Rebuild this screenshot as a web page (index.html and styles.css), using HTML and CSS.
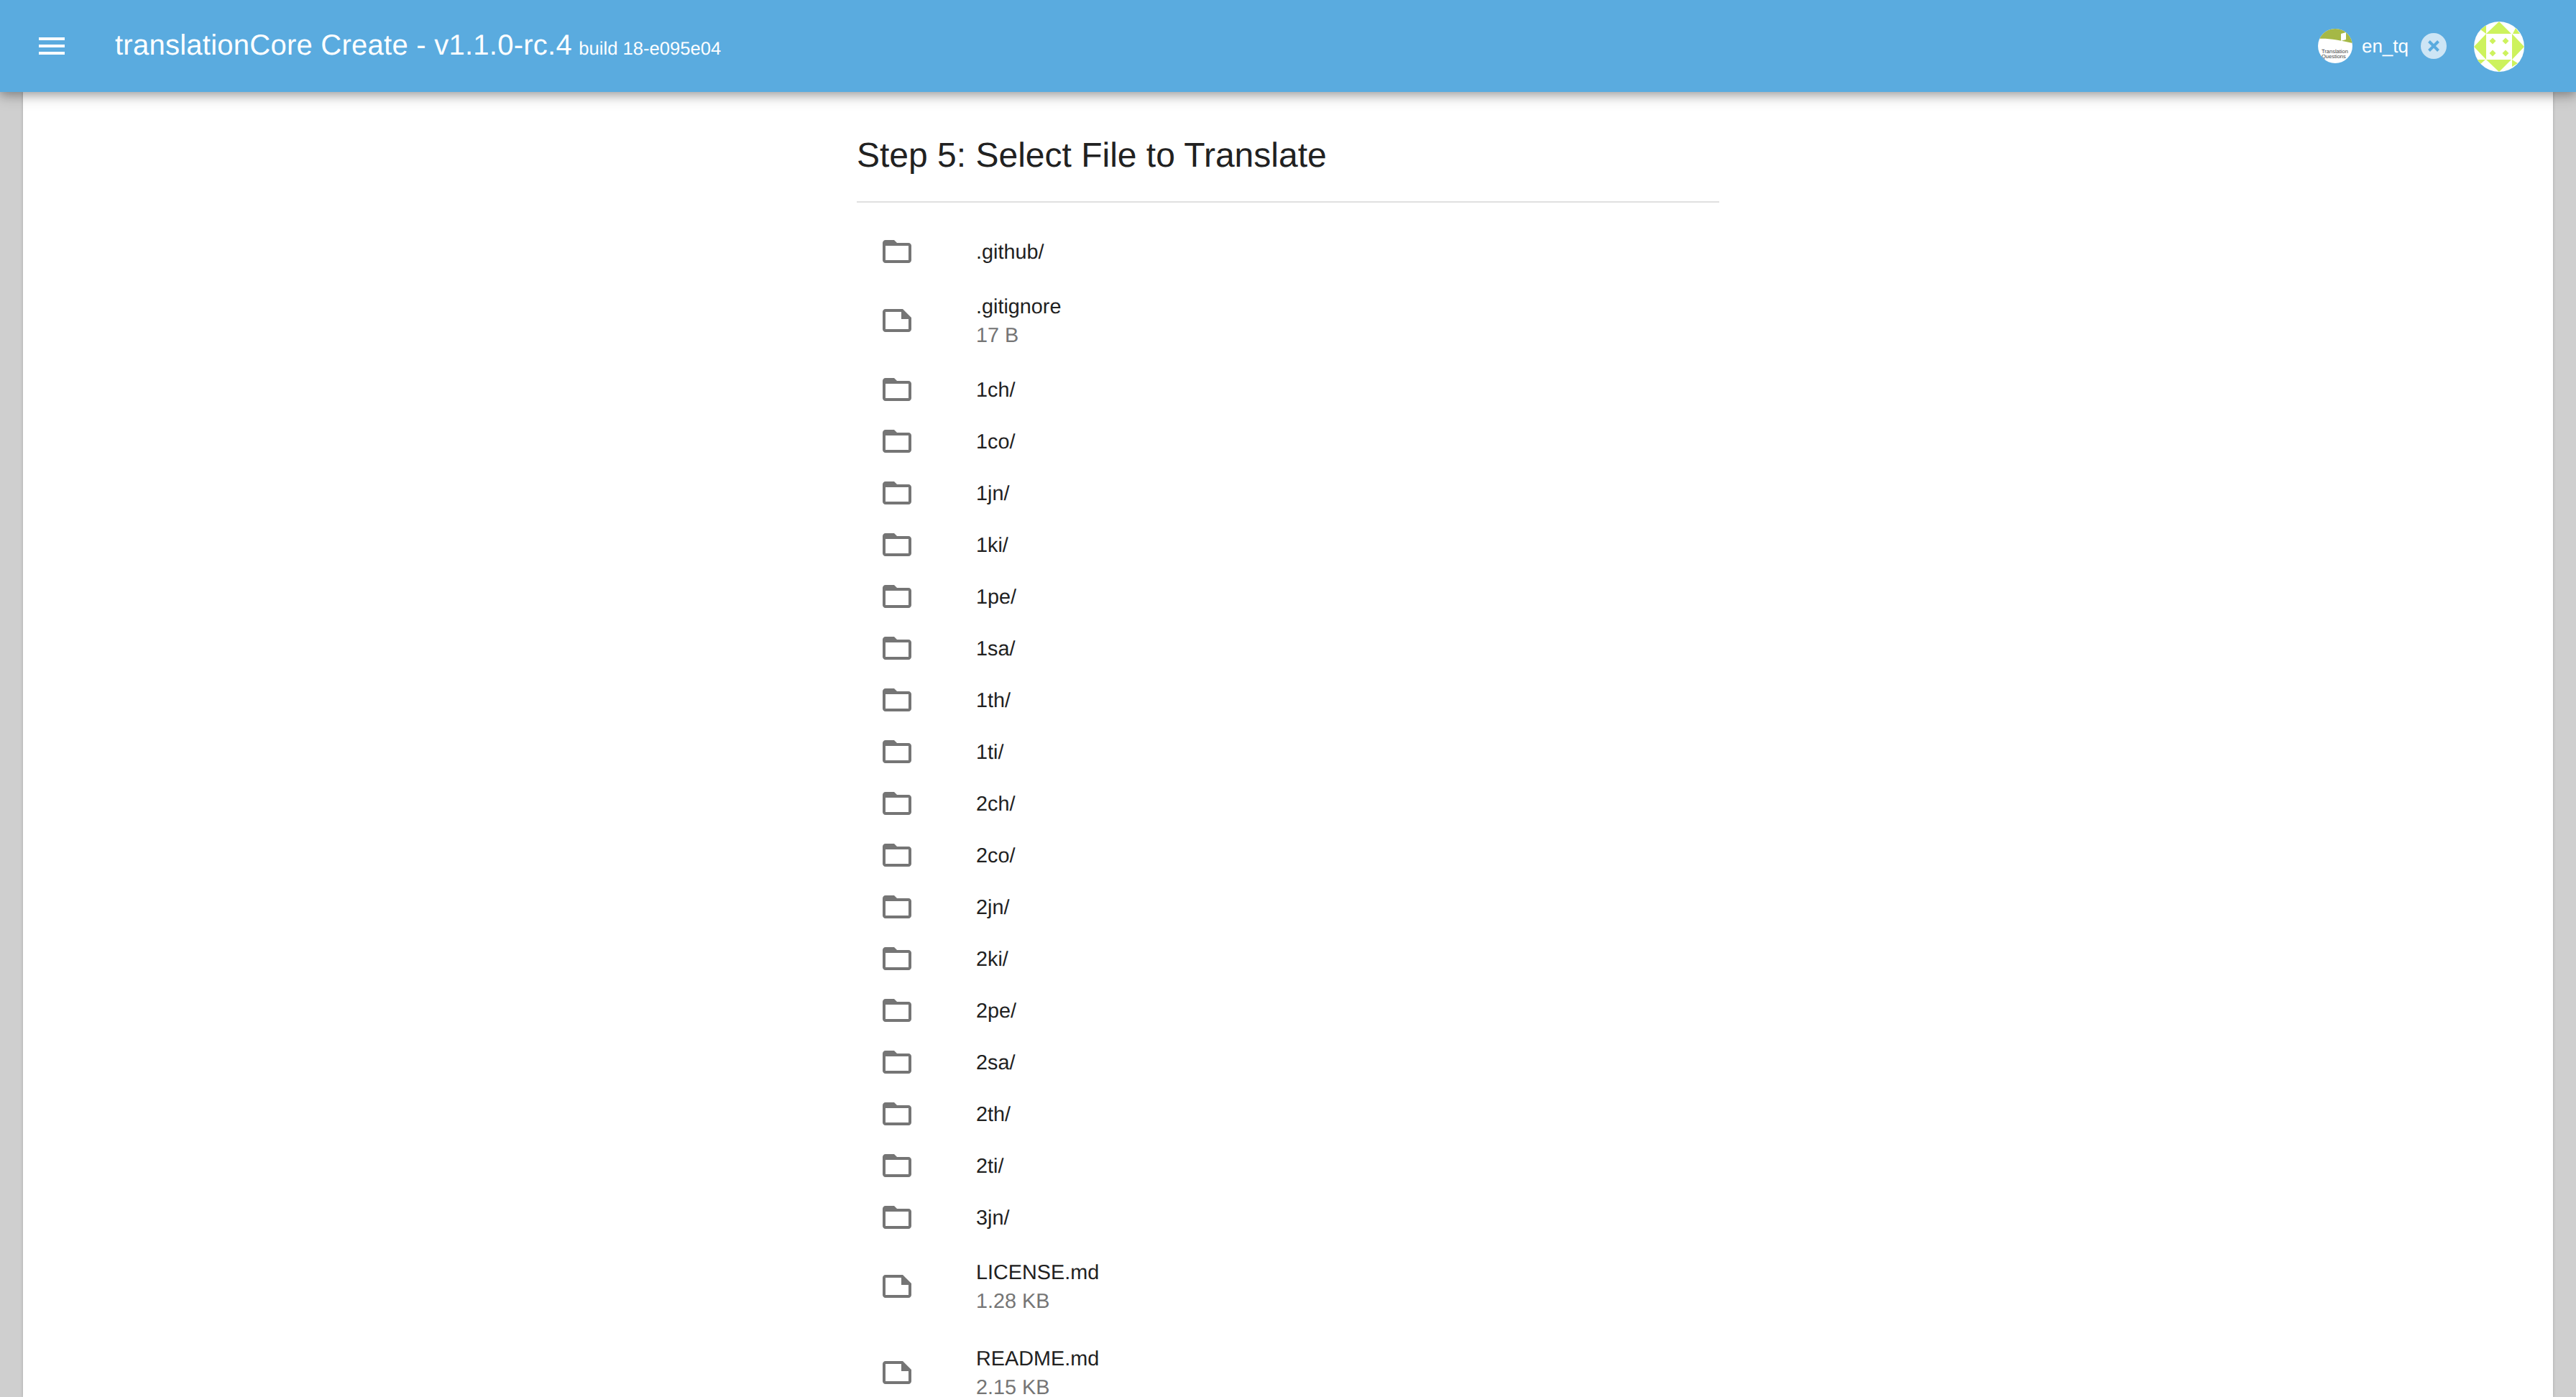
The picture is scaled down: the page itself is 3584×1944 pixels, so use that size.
FILE: index.html
```html
<!DOCTYPE html>
<html lang="en">
<head>
  <meta charset="UTF-8" />
  <title>translationCore Create</title>
  <link rel="stylesheet" href="styles.css">
</head>
<body>

  <svg class="sprite" xmlns="http://www.w3.org/2000/svg">
    <symbol id="folder" viewBox="0 0 24 24">
      <path d="M20 6h-8l-2-2H4c-1.1 0-1.99.9-1.99 2L2 18c0 1.1.9 2 2 2h16c1.1 0 2-.9 2-2V8c0-1.1-.9-2-2-2zm0 12H4V8h16v10z"/>
    </symbol>
    <symbol id="file" viewBox="0 0 24 24">
      <path fill-rule="evenodd" d="M16 4H4c-1.1 0-2 .9-2 2v12c0 1.1.9 2 2 2h16c1.1 0 2-.9 2-2v-8l-6-6zM4 18V6h11v5h5v7H4z"/>
    </symbol>
  </svg>

  <header class="appbar">
    <svg class="menu-icon" viewBox="0 0 24 24"><path d="M3 18h18v-2H3v2zm0-5h18v-2H3v2zm0-7v2h18V6H3z"/></svg>
    <div class="title">translationCore Create - v1.1.0-rc.4 <span class="build">build 18-e095e04</span></div>
    <div class="resource">
      <svg class="resource-logo" viewBox="0 0 48 48">
        <defs><clipPath id="logoClip"><circle cx="24" cy="24" r="24"/></clipPath></defs>
        <g clip-path="url(#logoClip)">
          <rect width="48" height="48" fill="#fff"/>
          <path d="M0 14C14 13 30 16 48 20V0H0z" fill="#a5b846"/>
          <path d="M32 7l7-2v10l-7 2z" fill="#fff"/>
          <text class="logo-text" x="5" y="34">Translation</text>
          <text class="logo-text" x="5" y="41">Questions</text>
        </g>
      </svg>
      <span class="resource-name">en_tq</span>
      <svg class="chip-close" viewBox="0 0 36 36">
        <circle cx="18" cy="18" r="18" fill="#cde5f5"/>
        <path d="M11.500 11.500l13 13m0-13l-13 13" stroke="#5aabdf" stroke-width="4" fill="none"/>
      </svg>
    </div>
    <svg class="avatar" viewBox="0 0 70 70">
      <defs><clipPath id="avatarClip"><circle cx="35" cy="35" r="35"/></clipPath></defs>
      <g clip-path="url(#avatarClip)">
        <rect width="70" height="70" fill="#fff"/>
        <g fill="#cdf25d">
          <path d="M35 0L52 17H17z"/>
          <path d="M70 35L53 17V53z"/>
          <path d="M35 70L52 53H17z"/>
          <path d="M0 35L17 17V53z"/>
          <path d="M17 5L9 11l8 6z"/>
          <path d="M58 9l6 8H54z"/>
          <path d="M4 53h12L8 60z"/>
          <path d="M53 53l8 5-8 5z"/>
          <path d="M26 22.500l4.500 4.500-4.500 4.500-4.500-4.500z"/>
          <path d="M44 22.500l4.500 4.500-4.500 4.500-4.500-4.500z"/>
          <path d="M26 39.500l4.500 4.500-4.500 4.500-4.500-4.500z"/>
          <path d="M44 39.500l4.500 4.500-4.500 4.500-4.500-4.500z"/>
        </g>
      </g>
    </svg>
  </header>

  <main class="paper">
    <div class="column">
      <h1 class="step-title">Step 5: Select File to Translate</h1>
      <ul class="file-list">
        <li class="row"><svg class="row-icon"><use href="#folder"/></svg><div class="row-text">.github/</div></li>
        <li class="row row-file"><svg class="row-icon"><use href="#file"/></svg><div class="row-text">.gitignore<div class="row-size">17 B</div></div></li>
        <li class="row"><svg class="row-icon"><use href="#folder"/></svg><div class="row-text">1ch/</div></li>
        <li class="row"><svg class="row-icon"><use href="#folder"/></svg><div class="row-text">1co/</div></li>
        <li class="row"><svg class="row-icon"><use href="#folder"/></svg><div class="row-text">1jn/</div></li>
        <li class="row"><svg class="row-icon"><use href="#folder"/></svg><div class="row-text">1ki/</div></li>
        <li class="row"><svg class="row-icon"><use href="#folder"/></svg><div class="row-text">1pe/</div></li>
        <li class="row"><svg class="row-icon"><use href="#folder"/></svg><div class="row-text">1sa/</div></li>
        <li class="row"><svg class="row-icon"><use href="#folder"/></svg><div class="row-text">1th/</div></li>
        <li class="row"><svg class="row-icon"><use href="#folder"/></svg><div class="row-text">1ti/</div></li>
        <li class="row"><svg class="row-icon"><use href="#folder"/></svg><div class="row-text">2ch/</div></li>
        <li class="row"><svg class="row-icon"><use href="#folder"/></svg><div class="row-text">2co/</div></li>
        <li class="row"><svg class="row-icon"><use href="#folder"/></svg><div class="row-text">2jn/</div></li>
        <li class="row"><svg class="row-icon"><use href="#folder"/></svg><div class="row-text">2ki/</div></li>
        <li class="row"><svg class="row-icon"><use href="#folder"/></svg><div class="row-text">2pe/</div></li>
        <li class="row"><svg class="row-icon"><use href="#folder"/></svg><div class="row-text">2sa/</div></li>
        <li class="row"><svg class="row-icon"><use href="#folder"/></svg><div class="row-text">2th/</div></li>
        <li class="row"><svg class="row-icon"><use href="#folder"/></svg><div class="row-text">2ti/</div></li>
        <li class="row"><svg class="row-icon"><use href="#folder"/></svg><div class="row-text">3jn/</div></li>
        <li class="row row-file"><svg class="row-icon"><use href="#file"/></svg><div class="row-text">LICENSE.md<div class="row-size">1.28 KB</div></div></li>
        <li class="row row-file"><svg class="row-icon"><use href="#file"/></svg><div class="row-text">README.md<div class="row-size">2.15 KB</div></div></li>
      </ul>
    </div>
  </main>

</body>
</html>
```

FILE: styles.css
```css
* {
  box-sizing: border-box;
}

html, body {
  height: 100%;
}

body {
  margin: 0;
  overflow: hidden;
  display: flex;
  flex-direction: column;
  font-family: "Liberation Sans", Arial, sans-serif;
  text-rendering: geometricPrecision;
  background-color: #cfcfcf;
}

.sprite {
  display: none;
}

.appbar {
  position: relative;
  z-index: 2;
  flex: none;
  display: flex;
  align-items: center;
  height: 128px;
  padding: 0 72px 0 48px;
  background-color: #5aabdf;
  color: #fff;
  box-shadow: 0 6px 20px rgba(0, 0, 0, 0.19), 0 4px 12px rgba(0, 0, 0, 0.23);
}

.menu-icon {
  flex: none;
  width: 48px;
  height: 48px;
  fill: #fff;
}

.title {
  margin-left: 64px;
  margin-bottom: 2px;
  font-size: 40px;
  letter-spacing: 0.250px;
  flex: 1;
}

.build {
  margin-left: -2px;
  font-size: 25.600px;
  letter-spacing: 0;
}

.resource {
  display: flex;
  align-items: center;
  margin-right: 38px;
}

.resource-logo {
  width: 48px;
  height: 48px;
}

.logo-text {
  font-size: 7.500px;
  fill: #444;
}

.resource-name {
  margin-left: 13px;
  font-size: 26px;
}

.chip-close {
  width: 36px;
  height: 36px;
  margin-left: 17px;
}

.avatar {
  width: 70px;
  height: 70px;
  margin-top: 2px;
}

.paper {
  flex: 1;
  min-height: 0;
  margin: 0 32px;
  background-color: #fff;
  box-shadow: 0 0 4px rgba(0, 0, 0, 0.2);
}

.column {
  width: 1200px;
  margin: 0 auto;
}

.step-title {
  margin: 0;
  padding: 57px 0 31px;
  border-bottom: 2px solid #e0e0e0;
  font-size: 48px;
  font-weight: 400;
  line-height: 64px;
  color: #212121;
}

.file-list {
  list-style: none;
  margin: 0;
  padding: 32px 0 0;
}

.row {
  display: flex;
  align-items: center;
  height: 72px;
  padding: 0 32px;
  font-size: 28.800px;
  line-height: 40px;
  color: #212121;
}

.row-file {
  height: 120px;
}

.row-icon {
  flex: none;
  width: 48px;
  height: 48px;
  margin-right: 86px;
  fill: #757575;
}

.row-text {
  margin-top: 2px;
}

.row-size {
  color: #757575;
}
```
